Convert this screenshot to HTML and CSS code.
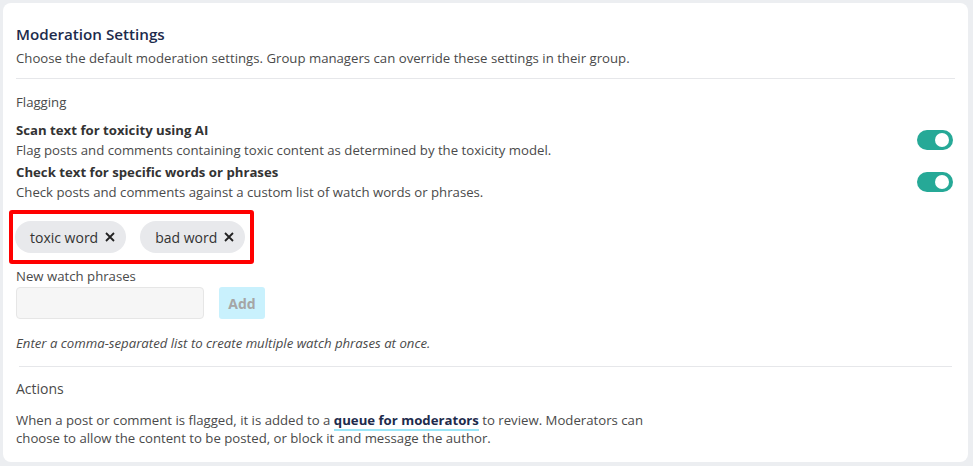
FILE: index.html
```html
<!DOCTYPE html>
<html lang="en">
<head>
  <meta charset="UTF-8" />
  <title>Moderation Settings</title>
  <link rel="stylesheet" href="styles.css">
</head>
<body>
  <div class="card">
    <h2 class="title">Moderation Settings</h2>
    <p class="subtitle">Choose the default moderation settings. Group managers can override these settings in their group.</p>
    <hr class="divider" />

    <div class="section-label">Flagging</div>

    <div class="setting">
      <div class="setting-text">
        <div class="setting-name">Scan text for toxicity using AI</div>
        <div class="setting-desc">Flag posts and comments containing toxic content as determined by the toxicity model.</div>
      </div>
      <span class="toggle on"><span class="knob"></span></span>
    </div>

    <div class="setting">
      <div class="setting-text">
        <div class="setting-name">Check text for specific words or phrases</div>
        <div class="setting-desc">Check posts and comments against a custom list of watch words or phrases.</div>
      </div>
      <span class="toggle on"><span class="knob"></span></span>
    </div>

    <div class="chips">
      <span class="chip">toxic word
        <svg class="chip-x" viewBox="0 0 12 12"><path d="M2 2L10 10M10 2L2 10"/></svg>
      </span>
      <span class="chip">bad word
        <svg class="chip-x" viewBox="0 0 12 12"><path d="M2 2L10 10M10 2L2 10"/></svg>
      </span>
    </div>

    <label class="field-label">New watch phrases</label>
    <div class="field-row">
      <input class="field-input" type="text" />
      <button class="add-btn" disabled>Add</button>
    </div>
    <p class="hint">Enter a comma-separated list to create multiple watch phrases at once.</p>

    <hr class="divider divider-inner" />

    <div class="section-label actions">Actions</div>
    <p class="actions-text">When a post or comment is flagged, it is added to a <a href="#">queue for moderators</a> to review. Moderators can<br>choose to allow the content to be posted, or block it and message the author.</p>
  </div>
</body>
</html>
```

FILE: styles.css
```css
html, body {
  margin: 0;
  padding: 0;
  background: #eceef1;
  font-family: 'Open Sans', 'Noto Sans', sans-serif;
  color: #444;
}
body {
  padding: 3px 5px 4px 3px;
}
.card {
  background: #fff;
  border-radius: 8px;
  padding: 20px 13px 18px 13px;
  height: 421px;
}
.title {
  margin: 0;
  font-size: 15.2px;
  font-weight: 600;
  color: #1d2b4c;
  line-height: 22px;
}
.subtitle {
  margin: 4px 0 0;
  font-size: 13.2px;
  line-height: 18px;
  color: #4a4a4a;
}
.divider {
  border: none;
  border-top: 1px solid #e6e7ea;
  margin: 11px 0 0;
}
.section-label {
  margin-top: 14px;
  font-size: 13.2px;
  line-height: 18px;
  color: #4a4a4a;
}
.setting {
  display: flex;
  align-items: center;
  justify-content: space-between;
  margin-top: 9px;
  padding-right: 2px;
}
.setting + .setting {
  margin-top: 2px;
}
.setting-name {
  font-size: 13.2px;
  font-weight: 700;
  line-height: 20px;
  color: #333;
}
.setting-desc {
  font-size: 13.2px;
  line-height: 20px;
  color: #4a4a4a;
}
.toggle {
  position: relative;
  display: inline-block;
  width: 36px;
  height: 20px;
  border-radius: 10px;
  background: #26a997;
}
.toggle .knob {
  position: absolute;
  top: 3px;
  right: 4px;
  width: 14px;
  height: 14px;
  border-radius: 50%;
  background: #fff;
}
.chips {
  display: flex;
  gap: 14px;
  margin: 8px 0 0 -7px;
  width: 230px;
  padding: 7px 5px 7px 2px;
  border: 4px solid #ff0000;
  border-radius: 3px;
}
.chip {
  display: inline-flex;
  flex-shrink: 0;
  align-items: center;
  gap: 6px;
  height: 32px;
  padding: 0 10px 0 15px;
  border-radius: 16px;
  background: #e8e9ec;
  font-size: 14px;
  color: #333;
  white-space: nowrap;
}
.chip-x {
  width: 12px;
  height: 12px;
  stroke: #222;
  stroke-width: 1.8;
  fill: none;
}
.field-label {
  display: block;
  margin-top: 3px;
  font-size: 13.2px;
  line-height: 18px;
  color: #4a4a4a;
}
.field-row {
  display: flex;
  gap: 15px;
  margin-top: 2px;
}
.field-input {
  width: 188px;
  height: 32px;
  box-sizing: border-box;
  border: 1px solid #e6e6e6;
  border-radius: 4px;
  background: #f6f6f6;
}
.add-btn {
  width: 46px;
  height: 32px;
  border: none;
  border-radius: 3px;
  background: #c9f1fd;
  color: #a5a5a5;
  font-family: 'Open Sans', sans-serif;
  font-size: 14px;
  font-weight: 700;
  padding: 0;
}
.hint {
  margin: 15px 0 0;
  font-size: 13.2px;
  line-height: 18px;
  font-style: italic;
  color: #4a4a4a;
}
.divider-inner {
  margin: 14px 3px 0;
}
.actions {
  margin-top: 13px;
  font-size: 14px;
}
.actions-text {
  margin: 13px 0 0;
  font-size: 13.2px;
  line-height: 18px;
  color: #4a4a4a;
}
.actions-text a {
  color: #1d2b4c;
  font-weight: 700;
  text-decoration: none;
  border-bottom: 2px solid #9ae6f7;
}
```
